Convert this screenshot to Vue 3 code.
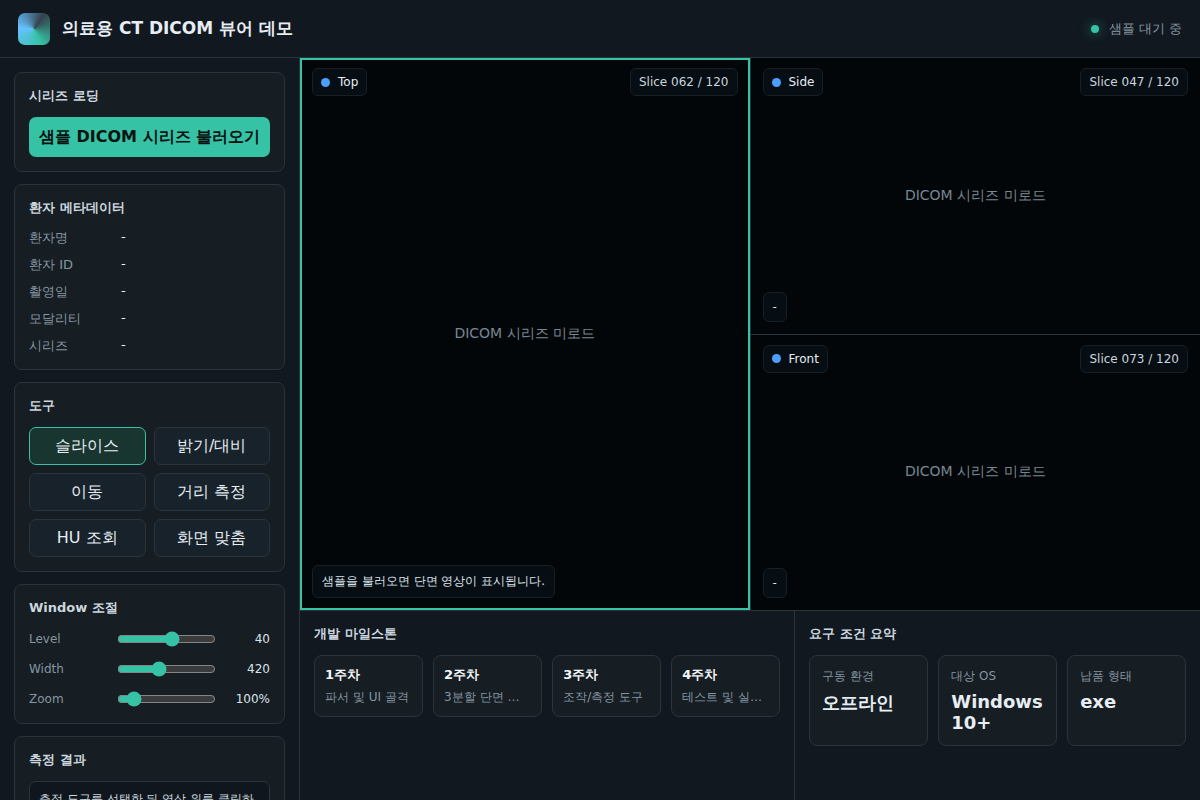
<template>
  <div class="app-shell">
    <header class="topbar">
      <div class="brand">
        <div class="brand-mark"></div>
        <h1>의료용 CT DICOM 뷰어 데모</h1>
      </div>
      <div class="status">
        <span class="status-dot"></span>
        <span>샘플 대기 중</span>
      </div>
    </header>

    <aside class="sidebar">
      <section class="panel">
        <h2>시리즈 로딩</h2>
        <button class="primary-button" type="button">샘플 DICOM 시리즈 불러오기</button>
      </section>

      <section class="panel">
        <h2>환자 메타데이터</h2>
        <dl class="meta-list">
          <template v-for="item in metadata" :key="item.label">
            <dt>{{ item.label }}</dt>
            <dd>{{ item.value }}</dd>
          </template>
        </dl>
      </section>

      <section class="panel">
        <h2>도구</h2>
        <div class="tool-grid">
          <button
            v-for="tool in tools"
            :key="tool.id"
            type="button"
            class="tool-button"
            :class="{ active: tool.id === activeTool }"
            @click="activeTool = tool.id"
          >
            {{ tool.label }}
          </button>
        </div>
      </section>

      <section class="panel">
        <h2>Window 조절</h2>
        <div class="control-list">
          <label v-for="control in controls" :key="control.label" class="control-row">
            <span>{{ control.label }}</span>
            <input
              v-model.number="control.value"
              type="range"
              :min="control.min"
              :max="control.max"
            />
            <output>{{ control.value }}{{ control.unit }}</output>
          </label>
        </div>
      </section>

      <section class="panel">
        <h2>측정 결과</h2>
        <div class="result-box">측정 도구를 선택한 뒤 영상 위를 클릭하세요.</div>
      </section>
    </aside>

    <main class="workspace">
      <div class="viewer-grid">
        <section
          v-for="view in views"
          :key="view.id"
          class="viewport"
          :class="[view.id, { active: view.id === activeView }]"
          @click="activeView = view.id"
        >
          <div class="view-label"><i></i>{{ view.label }}</div>
          <div class="slice-label">Slice {{ view.slice }} / 120</div>
          <p class="empty">DICOM 시리즈 미로드</p>
          <div class="readout">{{ view.readout }}</div>
        </section>
      </div>

      <div class="bottom">
        <section class="bottom-panel">
          <h2>개발 마일스톤</h2>
          <div class="milestones">
            <div v-for="step in milestones" :key="step.week" class="milestone">
              <strong>{{ step.week }}</strong>
              <span>{{ step.text }}</span>
            </div>
          </div>
        </section>
        <section class="bottom-panel">
          <h2>요구 조건 요약</h2>
          <div class="requirements">
            <div v-for="req in requirements" :key="req.label" class="requirement">
              <span>{{ req.label }}</span>
              <strong>{{ req.value }}</strong>
            </div>
          </div>
        </section>
      </div>
    </main>
  </div>
</template>

<script setup>
  import { ref } from 'vue'

  const activeTool = ref('slice')
  const activeView = ref('top')

  const metadata = [
    { label: '환자명', value: '-' },
    { label: '환자 ID', value: '-' },
    { label: '촬영일', value: '-' },
    { label: '모달리티', value: '-' },
    { label: '시리즈', value: '-' },
  ]

  const tools = [
    { id: 'slice', label: '슬라이스' },
    { id: 'window', label: '밝기/대비' },
    { id: 'pan', label: '이동' },
    { id: 'measure', label: '거리 측정' },
    { id: 'hu', label: 'HU 조회' },
    { id: 'fit', label: '화면 맞춤' },
  ]

  const controls = ref([
    { label: 'Level', value: 40, min: -1000, max: 830, unit: '' },
    { label: 'Width', value: 420, min: 1, max: 1030, unit: '' },
    { label: 'Zoom', value: 100, min: 55, max: 460, unit: '%' },
  ])

  const views = [
    { id: 'top', label: 'Top', slice: '062', readout: '샘플을 불러오면 단면 영상이 표시됩니다.' },
    { id: 'side', label: 'Side', slice: '047', readout: '-' },
    { id: 'front', label: 'Front', slice: '073', readout: '-' },
  ]

  const milestones = [
    { week: '1주차', text: '파서 및 UI 골격' },
    { week: '2주차', text: '3분할 단면 렌더링' },
    { week: '3주차', text: '조작/측정 도구' },
    { week: '4주차', text: '테스트 및 실행파일' },
  ]

  const requirements = [
    { label: '구동 환경', value: '오프라인' },
    { label: '대상 OS', value: 'Windows 10+' },
    { label: '납품 형태', value: 'exe' },
  ]
</script>

<style>
  html {
    color-scheme: dark;
  }

  body {
    margin: 0;
    overflow: hidden;
    background: #0b0f13;
  }
</style>

<style scoped>
  .app-shell {
    --bg: #11181f;
    --panel: #161d23;
    --line: #2a343d;
    --text: #e6edf3;
    --muted: #8595a1;
    --accent: #36c2a5;
    display: grid;
    grid-template-columns: 300px minmax(0, 1fr);
    grid-template-rows: 58px minmax(0, 1fr);
    height: 100vh;
    color: var(--text);
    background: var(--bg);
    font-family: 'DejaVu Sans', sans-serif;
  }

  * {
    box-sizing: border-box;
  }

  button {
    font: inherit;
    cursor: pointer;
  }

  h2 {
    margin: 0 0 12px;
    color: #cbd6df;
    font-size: 13px;
    font-weight: 700;
    line-height: 18px;
  }

  .topbar {
    grid-column: 1 / -1;
    display: flex;
    align-items: center;
    justify-content: space-between;
    padding: 0 18px;
    border-bottom: 1px solid var(--line);
  }

  .brand {
    display: flex;
    align-items: center;
    gap: 12px;
  }

  .brand-mark {
    width: 32px;
    height: 32px;
    border-radius: 7px;
    background: conic-gradient(from 35deg, #35424e, #36c2a5, #66c2ff, #35424e);
  }

  h1 {
    margin: 0;
    font-size: 17px;
    font-weight: 700;
  }

  .status {
    display: flex;
    align-items: center;
    gap: 10px;
    color: var(--muted);
    font-size: 13px;
  }

  .status-dot {
    width: 8px;
    height: 8px;
    border-radius: 50%;
    background: var(--accent);
    box-shadow: 0 0 12px rgba(54, 194, 165, 0.7);
  }

  .sidebar {
    display: flex;
    flex-direction: column;
    gap: 12px;
    padding: 14px;
    border-right: 1px solid var(--line);
    overflow: hidden;
  }

  .panel {
    flex-shrink: 0;
    padding: 14px;
    border: 1px solid var(--line);
    border-radius: 8px;
    background: var(--panel);
  }

  .primary-button {
    display: block;
    width: 100%;
    height: 40px;
    padding: 0;
    border: 0;
    border-radius: 7px;
    color: #06120f;
    background: var(--accent);
    font-weight: 700;
    white-space: nowrap;
  }

  .meta-list {
    display: grid;
    grid-template-columns: 84px 1fr;
    gap: 9px 8px;
    margin: 0;
    font-size: 13px;
  }

  .meta-list dt {
    color: var(--muted);
    line-height: 18px;
  }

  .meta-list dd {
    margin: 0;
    color: #f3f7fa;
  }

  .tool-grid {
    display: grid;
    grid-template-columns: 1fr 1fr;
    gap: 8px;
  }

  .tool-button {
    height: 38px;
    padding: 0;
    border: 1px solid var(--line);
    border-radius: 7px;
    color: var(--text);
    background: #18222a;
  }

  .tool-button.active {
    border-color: var(--accent);
    background: #18352f;
  }

  .control-list {
    display: grid;
    gap: 10px;
  }

  .control-row {
    display: grid;
    grid-template-columns: 78px 1fr 44px;
    align-items: center;
    gap: 10px;
    height: 20px;
    color: var(--muted);
    font-size: 12px;
  }

  .control-row input {
    width: 100%;
    margin: 0;
    accent-color: var(--accent);
  }

  .control-row output {
    color: #dae3ea;
    text-align: right;
  }

  .result-box {
    min-height: 64px;
    padding: 8px 9px;
    border: 1px solid var(--line);
    border-radius: 7px;
    color: #cbd6df;
    background: #10161d;
    font-size: 12px;
    line-height: 18px;
  }

  .workspace {
    display: grid;
    grid-template-rows: minmax(0, 1fr) 190px;
    min-width: 0;
  }

  .viewer-grid {
    display: grid;
    grid-template-columns: 1fr 1fr;
    grid-template-rows: 1fr 1fr;
    gap: 1px;
    min-height: 0;
    background: var(--line);
  }

  .viewport {
    position: relative;
    display: grid;
    place-items: center;
    background: #030608;
    font-size: 12px;
  }

  .viewport.top {
    grid-row: 1 / 3;
  }

  .viewport.active {
    box-shadow: inset 0 0 0 2px var(--accent);
  }

  .view-label,
  .slice-label,
  .readout {
    position: absolute;
    border: 1px solid #172026;
    border-radius: 6px;
    background: #060d13;
  }

  .view-label {
    top: 10px;
    left: 12px;
    display: flex;
    align-items: center;
    gap: 8px;
    padding: 6px 8px;
  }

  .view-label i {
    width: 9px;
    height: 9px;
    border-radius: 50%;
    background: #4c9fff;
  }

  .slice-label {
    top: 10px;
    right: 12px;
    padding: 6px 8px;
    color: #cbd6df;
  }

  .readout {
    bottom: 12px;
    left: 12px;
    padding: 7px 9px;
    color: #dae3ea;
  }

  .empty {
    margin: 0;
    color: #788792;
    font-size: 14px;
  }

  .bottom {
    display: grid;
    grid-template-columns: minmax(0, 1.1fr) minmax(0, 0.9fr);
    gap: 1px;
    border-top: 1px solid var(--line);
    background: var(--line);
  }

  .bottom-panel {
    min-width: 0;
    padding: 14px;
    background: var(--bg);
  }

  .milestones {
    display: grid;
    grid-template-columns: repeat(4, minmax(0, 1fr));
    gap: 10px;
  }

  .milestone,
  .requirement {
    min-width: 0;
    border: 1px solid var(--line);
    border-radius: 8px;
    background: var(--panel);
  }

  .milestone {
    height: 62px;
    padding: 10px;
  }

  .milestone strong {
    display: block;
    margin-bottom: 5px;
    color: #f3f7fa;
    font-size: 13px;
    line-height: 18px;
  }

  .milestone span {
    display: block;
    overflow: hidden;
    color: var(--muted);
    font-size: 12px;
    text-overflow: ellipsis;
    white-space: nowrap;
  }

  .requirements {
    display: grid;
    grid-template-columns: repeat(3, minmax(0, 1fr));
    gap: 10px;
  }

  .requirement {
    padding: 12px;
  }

  .requirement span {
    display: block;
    margin-bottom: 6px;
    color: var(--muted);
    font-size: 12px;
  }

  .requirement strong {
    display: block;
    font-size: 18px;
  }
</style>
